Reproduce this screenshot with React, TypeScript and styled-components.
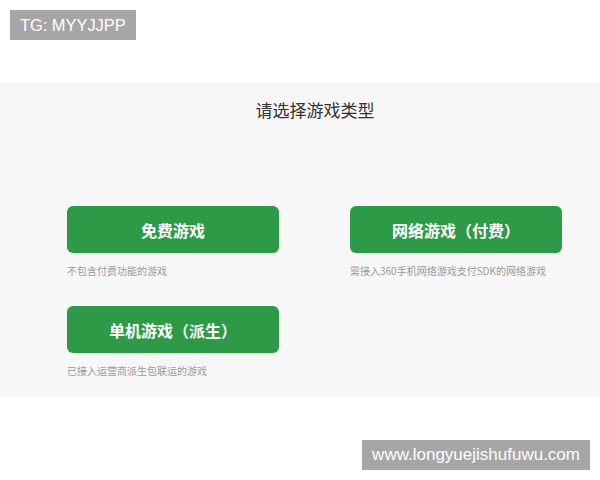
import React from "react";
import styled, { createGlobalStyle } from "styled-components";

const Global = createGlobalStyle`
  html, body { margin: 0; padding: 0; background: #fff; }
  body { font-family: "Liberation Sans", "Noto Sans CJK SC", Arial, sans-serif; }
`;

const Page = styled.div`
  position: relative;
  width: 600px;
  height: 480px;
  overflow: hidden;
  background: #fff;
`;

const Watermark = styled.div<{ $top?: number; $left?: number; $right?: number; $size: number }>`
  position: absolute;
  top: ${(p) => p.$top}px;
  ${(p) => (p.$left !== undefined ? `left: ${p.$left}px;` : "")}
  ${(p) => (p.$right !== undefined ? `right: ${p.$right}px;` : "")}
  height: 30px;
  padding: 0 10px;
  display: flex;
  align-items: center;
  background: #a6a6a6;
  color: #fff;
  font-family: "Liberation Sans", Arial, sans-serif;
  font-size: ${(p) => p.$size}px;
  white-space: nowrap;
`;

const Panel = styled.section`
  margin-top: 82px;
  height: 315px;
  background: #f7f7f7;
  box-sizing: border-box;
  padding-top: 18px;
  font-family: "Noto Sans CJK SC", "Liberation Sans", sans-serif;
`;

const Title = styled.h2`
  margin: 0;
  padding-left: 30px;
  text-align: center;
  font-size: 17px;
  line-height: 20px;
  font-weight: 400;
  color: #333;
`;

const Grid = styled.div`
  margin-top: 86px;
  padding-left: 67px;
  display: grid;
  grid-template-columns: 212px 212px;
  column-gap: 71px;
  row-gap: 28px;
`;

const Item = styled.div`
  display: flex;
  flex-direction: column;
`;

const GameButton = styled.button`
  width: 212px;
  height: 47px;
  border: none;
  border-radius: 6px;
  background: #2d9a48;
  color: #fff;
  font-family: "Noto Sans CJK SC", sans-serif;
  font-size: 16px;
  font-weight: 700;
  display: flex;
  align-items: center;
  justify-content: center;
  padding: 0;
  cursor: pointer;
`;

const Desc = styled.p`
  margin: 11px 0 0;
  font-size: 10px;
  line-height: 14px;
  color: #9a9a9a;
  white-space: nowrap;
`;

const items = [
  { label: "免费游戏", desc: "不包含付费功能的游戏" },
  { label: "网络游戏（付费）", desc: "需接入360手机网络游戏支付SDK的网络游戏" },
  { label: "单机游戏（派生）", desc: "已接入运营商派生包联运的游戏" },
];

export default function App() {
  return (
    <Page>
      <Global />
      <Panel>
        <Title>请选择游戏类型</Title>
        <Grid>
          {items.map((it) => (
            <Item key={it.label}>
              <GameButton>{it.label}</GameButton>
              <Desc>{it.desc}</Desc>
            </Item>
          ))}
        </Grid>
      </Panel>
      <Watermark $top={10} $left={10} $size={16.4}>TG: MYYJJPP</Watermark>
      <Watermark $top={440} $right={10} $size={17}>www.longyuejishufuwu.com</Watermark>
    </Page>
  );
}
